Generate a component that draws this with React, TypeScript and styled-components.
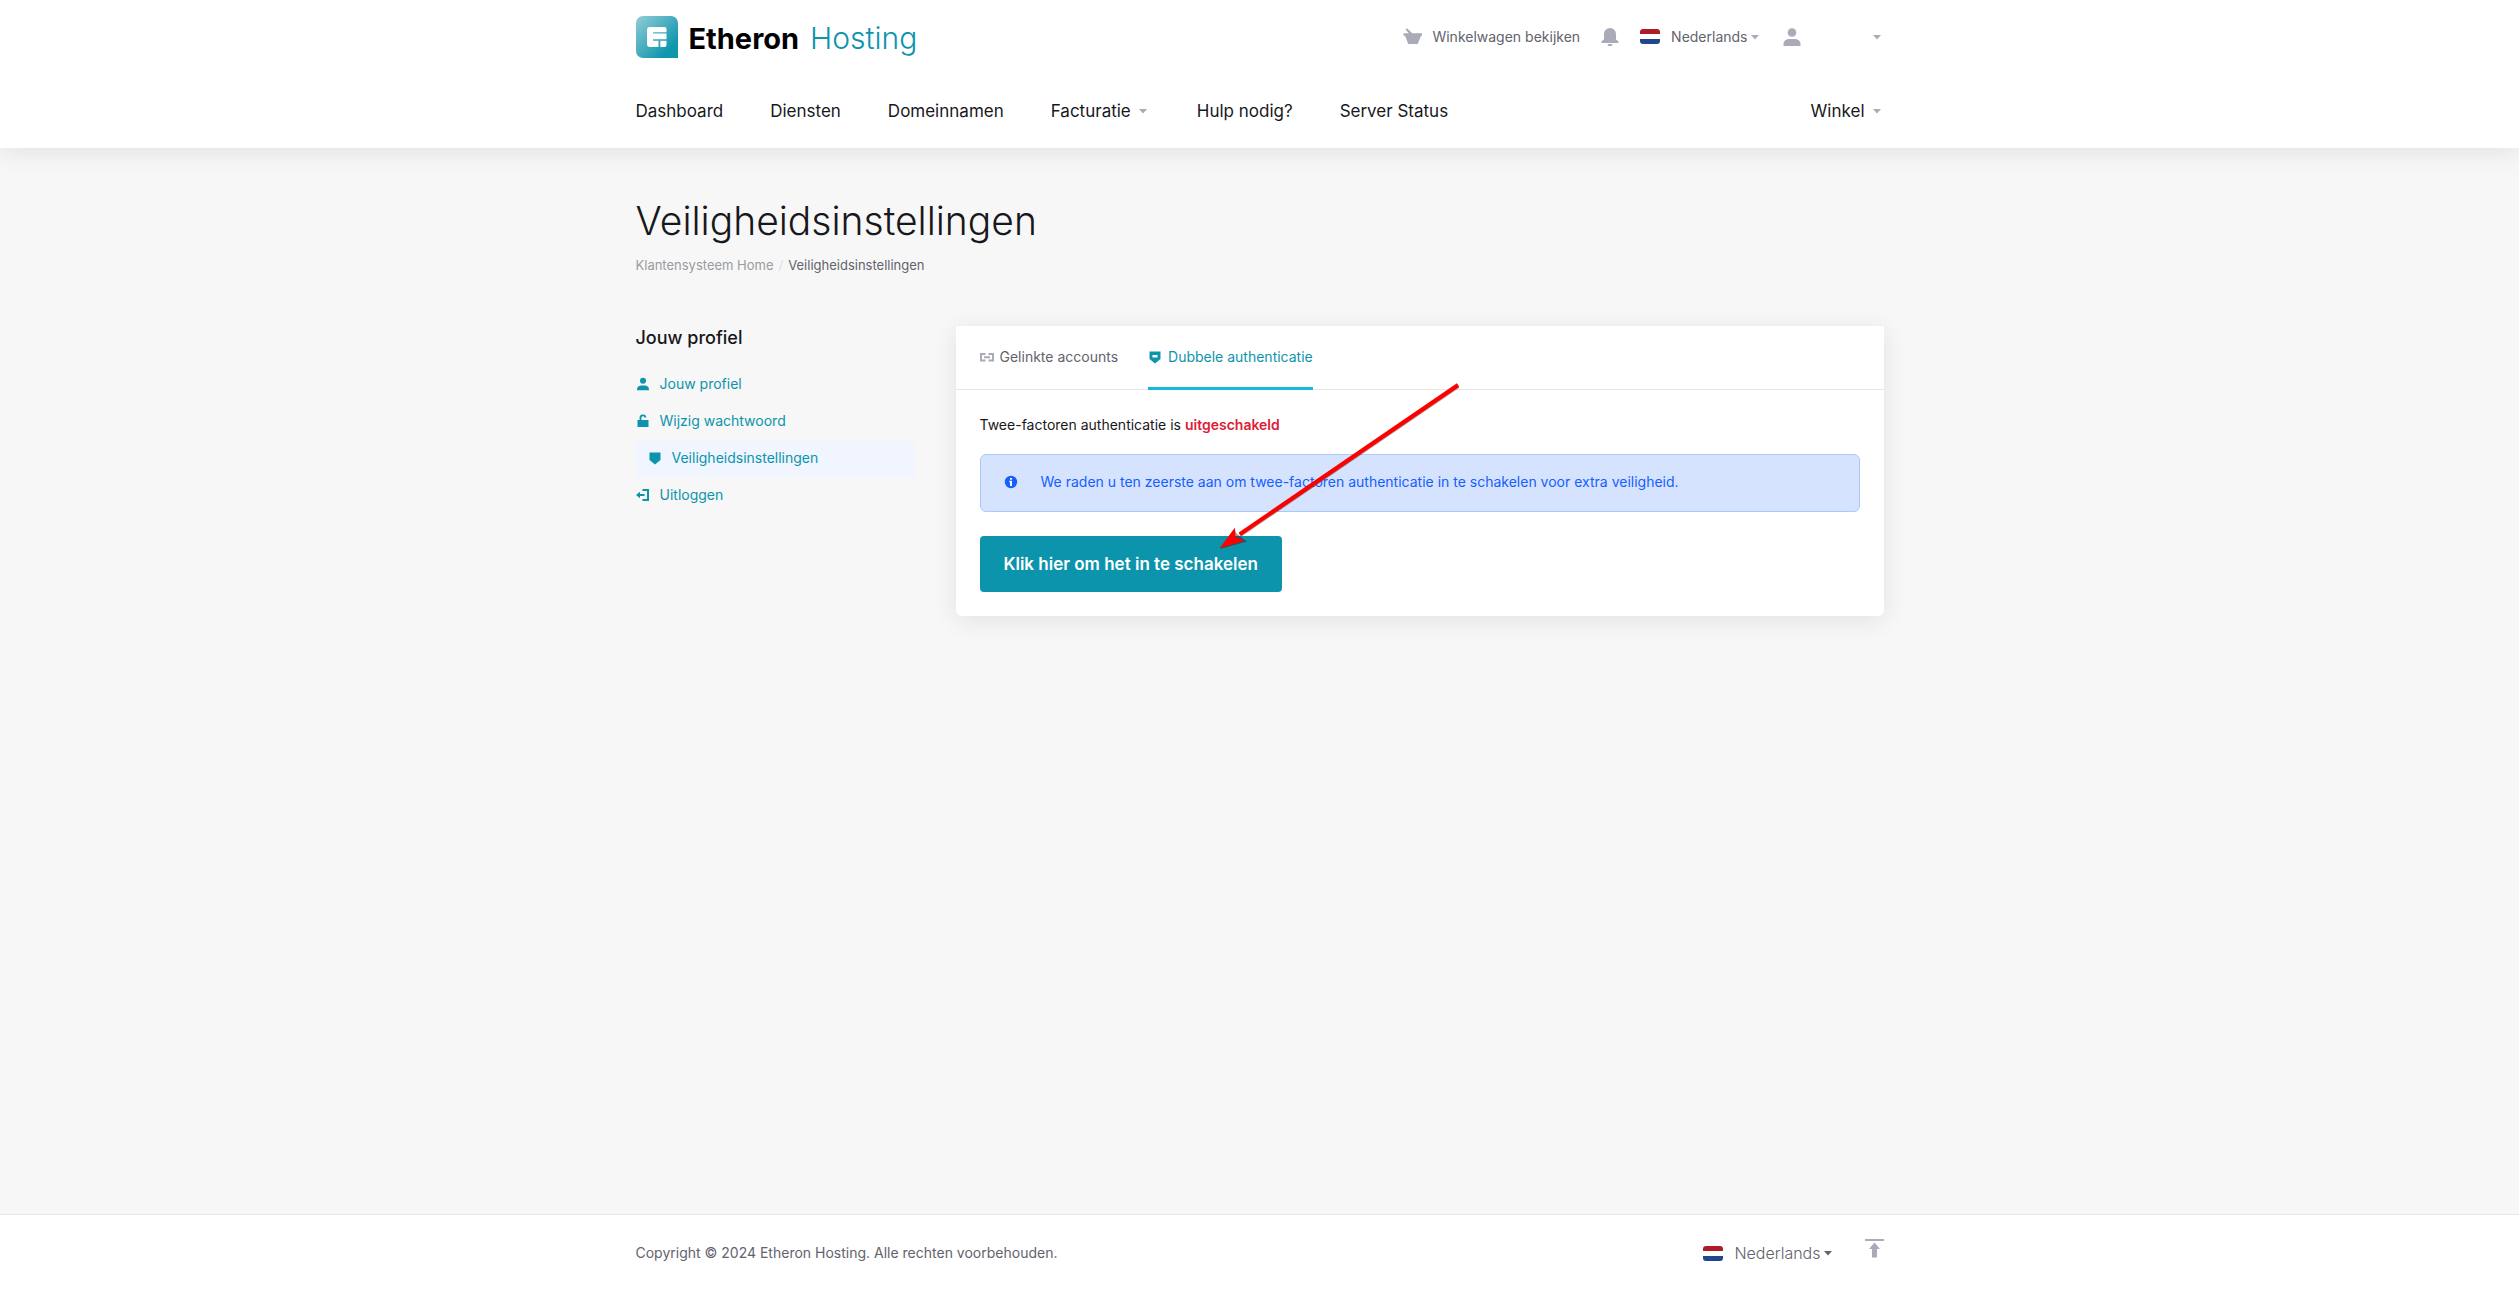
import React from "react";
import styled, { createGlobalStyle, css } from "styled-components";

const color = {
  teal: "#0c94ac",
  accent: "#14bbd8",
  ink: "#17181c",
  text: "#62636d",
  muted: "#999ba2",
  icon: "#a9abb8",
  line: "#e6e6e8",
  page: "#f7f7f7",
  info: "#155eff",
  danger: "#dc2036",
};

const GlobalStyle = createGlobalStyle`
  *, *::before, *::after { box-sizing: border-box; }
  body {
    margin: 0;
    background: ${color.page};
    color: ${color.ink};
    font: 400 14px/24px Inter, "Liberation Sans", sans-serif;
  }
  a { color: inherit; text-decoration: none; }
  button { font: inherit; color: inherit; border: 0; padding: 0; background: none; cursor: pointer; }
  svg { display: block; flex: none; }
`;

const Page = styled.div`
  min-height: 100vh;
  display: flex;
  flex-direction: column;
`;

const Container = styled.div`
  width: 100%;
  max-width: 1296px;
  margin: 0 auto;
  padding: 0 24px;
`;

const Header = styled.header`
  background: #fff;
  box-shadow: 0 4px 24px rgba(0, 0, 0, 0.09);
`;

const TopBar = styled.div`
  height: 73px;
  display: flex;
  align-items: center;
  justify-content: space-between;
`;

const Brand = styled.a`
  display: flex;
  align-items: center;
  gap: 11px;
  font-size: 30px;
  line-height: 40px;
  color: ${color.teal};
  font-weight: 300;
`;

const BrandName = styled.span`
  display: flex;
  align-items: baseline;
  gap: 11px;
  padding-top: 3px;
`;

const BrandStrong = styled.strong`
  font-size: 29px;
  font-weight: 700;
  color: #000;
`;

const Tools = styled.div`
  display: flex;
  align-items: center;
  gap: 18px;
  color: ${color.text};
`;

const ToolLink = styled.a`
  display: flex;
  align-items: center;
  gap: 7px;
`;

const LanguageButton = styled.button<{ $light?: boolean }>`
  display: flex;
  align-items: center;
  color: ${color.text};
  ${(p) =>
    p.$light &&
    css`
      font-size: 16px;
      font-weight: 300;
    `}
`;

const LanguageName = styled.span`
  margin-left: 11px;
`;

const Flag = styled.span`
  width: 20px;
  height: 15px;
  border-radius: 3px;
  background: linear-gradient(#ae1c28 0 5px, #fff 5px 10px, #21468b 10px);
`;

const AccountButton = styled.button`
  width: 104px;
  display: flex;
  align-items: center;
  justify-content: space-between;
`;

const Nav = styled.nav`
  height: 75px;
  display: flex;
  align-items: center;
  gap: 47px;
  font-size: 17px;
`;

const NavItem = styled.a<{ $end?: boolean }>`
  display: flex;
  align-items: center;
  gap: 5px;
  margin-left: ${(p) => (p.$end ? "auto" : "0")};
`;

const Main = styled.main`
  flex: 1;
  padding: 48px 0;
`;

const Title = styled.h1`
  margin: 0;
  font-size: 39px;
  line-height: 50px;
  font-weight: 300;
`;

const Crumbs = styled.nav`
  display: flex;
  gap: 5px;
  margin: 9px 0 51px;
  font-size: 13px;
  line-height: 20px;
  color: ${color.text};
`;

const CrumbLink = styled.a`
  color: ${color.muted};
`;

const CrumbSlash = styled.span`
  color: #dddde3;
`;

const Columns = styled.div`
  display: grid;
  grid-template-columns: 279px 1fr;
  gap: 41px;
  align-items: start;
`;

const SideTitle = styled.h2`
  margin: 0 0 17px;
  font-size: 18px;
  line-height: 24px;
  font-weight: 500;
`;

const SideList = styled.ul`
  display: grid;
  gap: 1px;
  margin: 0;
  padding: 0;
  list-style: none;
`;

const SideLink = styled.a<{ $active?: boolean }>`
  height: 36px;
  display: flex;
  align-items: center;
  gap: 10px;
  padding: 0 ${(p) => (p.$active ? 12 : 0)}px 2px;
  border-radius: 4px;
  background: ${(p) => (p.$active ? "#f0f5ff" : "transparent")};
  color: ${color.teal};
`;

const Card = styled.section`
  position: relative;
  background: #fff;
  border-radius: 0 0 6px 6px;
  box-shadow: 0 4px 24px rgba(0, 0, 0, 0.09);
`;

const Tabs = styled.div`
  height: 64px;
  display: flex;
  gap: 30px;
  padding: 0 24px;
  box-shadow: inset 0 -1px ${color.line};
`;

const Tab = styled.button<{ $active?: boolean }>`
  display: flex;
  align-items: center;
  gap: 6px;
  padding-bottom: 2px;
  color: ${(p) => (p.$active ? color.teal : color.text)};
  box-shadow: ${(p) => (p.$active ? `inset 0 -3px ${color.accent}` : "none")};
`;

const CardBody = styled.div`
  padding: 23px 24px 24px;
`;

const Status = styled.p`
  margin: 0 0 17px;
`;

const StatusValue = styled.strong`
  font-weight: 600;
  color: ${color.danger};
`;

const Alert = styled.div`
  display: flex;
  align-items: center;
  gap: 23px;
  margin-bottom: 24px;
  padding: 15px 23px 17px;
  border: 1px solid #adc8ff;
  border-radius: 6px;
  background: #d6e3ff;
  color: ${color.info};
`;

const PrimaryButton = styled.button`
  height: 56px;
  padding: 0 24px;
  border-radius: 4px;
  background: ${color.teal};
  color: #fff;
  font-size: 17px;
  font-weight: 600;
`;

const Pointer = styled.svg`
  position: absolute;
  top: 54px;
  left: 260px;
  pointer-events: none;
`;

const Footer = styled.footer`
  background: #fff;
  border-top: 1px solid ${color.line};
  color: ${color.text};
`;

const FooterRow = styled.div`
  min-height: 76px;
  display: flex;
  align-items: center;
  justify-content: space-between;
`;

const FooterTools = styled.div`
  display: flex;
  align-items: center;
  gap: 30px;
`;

const TopLink = styled.a`
  padding-bottom: 10px;
`;

const Caret = ({ fill = color.icon }: { fill?: string }) => (
  <svg width="14" height="14" viewBox="0 0 14 14" aria-hidden="true">
    <path d="M3 5h8L7 9.500z" fill={fill} />
  </svg>
);

const LogoMark = () => (
  <svg width="42" height="42" viewBox="0 0 42 42" aria-hidden="true">
    <defs>
      <linearGradient id="mark" x1="0" y1="0" x2="1" y2="1">
        <stop offset="0" stopColor="#93cdd7" />
        <stop offset="0.8" stopColor="#1096ad" />
      </linearGradient>
    </defs>
    <path d="M7 0h28a7 7 0 0 1 7 7v35H7a7 7 0 0 1-7-7V7a7 7 0 0 1 7-7z" fill="url(#mark)" />
    <path
      d="M14 11h14.500a2 2 0 0 1 2 2v3.200H17v1.300h13.500v5.700H17v1.500h5.500V31H14a3 3 0 0 1-3-3V14a3 3 0 0 1 3-3z"
      fill="#fff"
    />
    <path d="M24.300 24.700h6.200V29a2 2 0 0 1-2 2h-4.200z" fill="#fff" />
  </svg>
);

const BasketIcon = () => (
  <svg width="24" height="24" viewBox="0 0 24 24" fill={color.icon} aria-hidden="true">
    <path d="M4.500 4.500 6 3.300 11.300 8.200H21v2.600h-1L16.900 18.500a1 1 0 0 1-.9.500H8a1 1 0 0 1-.9-.5L4 10.800H2.500V8.200h5.300z" />
  </svg>
);

const BellIcon = () => (
  <svg width="24" height="24" viewBox="0 0 24 24" fill={color.icon} aria-hidden="true">
    <path d="M12 3a6 6 0 0 1 6 6v5.500l2.500 1.800V18h-17v-1.700L6 14.500V9a6 6 0 0 1 6-6zM9.500 19h5a2.500 2.300 0 0 1-5 0z" />
  </svg>
);

const PersonIcon = ({ size, inset, fill }: { size: number; inset: number; fill: string }) => (
  <svg
    width={size}
    height={size}
    viewBox={`${inset} ${inset} ${24 - 2 * inset} ${24 - 2 * inset}`}
    fill={fill}
    aria-hidden="true"
  >
    <circle cx="12" cy="7.500" r="4.300" />
    <path d="M3.500 21v-2c0-3.300 3-5 6-5h5c3 0 6 1.700 6 5v2z" />
  </svg>
);

const LockIcon = () => (
  <svg width="14" height="14" viewBox="0 0 14 14" aria-hidden="true">
    <path d="M1.500 6h11v7h-11z" fill={color.teal} />
    <path d="M4.500 6.500V4.300a2.500 2.500 0 0 1 5-.8" fill="none" stroke={color.teal} strokeWidth="1.800" />
  </svg>
);

const ShieldIcon = ({ cut }: { cut?: boolean }) => (
  <svg width="14" height="14" viewBox="0 0 14 14" aria-hidden="true">
    <path d="M1.500 1.500h11V9L7 13.500 1.500 9z" fill={color.teal} />
    {cut && <path d="M4.500 5h5v2.500h-5z" fill="#fff" />}
  </svg>
);

const LogoutIcon = () => (
  <svg width="14" height="14" viewBox="0 0 14 14" fill={color.teal} aria-hidden="true">
    <path d="M6.500 1H13v12H6.500v-2h4.500V3H6.500z" />
    <path d="M0 7l4-3.300v2.300h4.500v2H4v2.300z" />
  </svg>
);

const LinkIcon = () => (
  <svg width="14" height="14" viewBox="0 0 14 14" fill="none" stroke={color.icon} strokeWidth="2" aria-hidden="true">
    <path d="M5.500 4H1v6.500h4.500M8.500 4H13v6.500H8.500M4 7.200h6" />
  </svg>
);

const InfoIcon = () => (
  <svg width="14" height="14" viewBox="0 0 14 14" aria-hidden="true">
    <circle cx="7" cy="7" r="6.200" fill={color.info} />
    <path d="M6 3h2v1.800H6zM5.300 5.800H8V11H6V7.200h-.7z" fill="#fff" />
  </svg>
);

const ToTopIcon = () => (
  <svg width="19" height="19" viewBox="0 0 19 19" fill={color.icon} aria-hidden="true">
    <path d="M0 0h19v2H0zM9.500 3.500 15 10h-3v8.500H7V10H4z" />
  </svg>
);

const navItems = [
  { label: "Dashboard" },
  { label: "Diensten" },
  { label: "Domeinnamen" },
  { label: "Facturatie", menu: true },
  { label: "Hulp nodig?" },
  { label: "Server Status" },
  { label: "Winkel", menu: true, end: true },
];

const sideItems = [
  { label: "Jouw profiel", icon: <PersonIcon size={14} inset={2} fill={color.teal} /> },
  { label: "Wijzig wachtwoord", icon: <LockIcon /> },
  { label: "Veiligheidsinstellingen", icon: <ShieldIcon />, active: true },
  { label: "Uitloggen", icon: <LogoutIcon /> },
];

export default function App() {
  return (
    <Page>
      <GlobalStyle />
      <Header>
        <Container>
          <TopBar>
            <Brand href="#">
              <LogoMark />
              <BrandName>
                <BrandStrong>Etheron</BrandStrong>
                <span>Hosting</span>
              </BrandName>
            </Brand>
            <Tools>
              <ToolLink href="#">
                <BasketIcon />
                Winkelwagen bekijken
              </ToolLink>
              <button type="button" aria-label="Meldingen">
                <BellIcon />
              </button>
              <LanguageButton type="button">
                <Flag />
                <LanguageName>Nederlands</LanguageName>
                <Caret />
              </LanguageButton>
              <AccountButton type="button" aria-label="Account">
                <PersonIcon size={24} inset={0} fill={color.icon} />
                <Caret />
              </AccountButton>
            </Tools>
          </TopBar>
          <Nav>
            {navItems.map((item) => (
              <NavItem key={item.label} href="#" $end={item.end}>
                {item.label}
                {item.menu && <Caret />}
              </NavItem>
            ))}
          </Nav>
        </Container>
      </Header>

      <Main>
        <Container>
          <Title>Veiligheidsinstellingen</Title>
          <Crumbs>
            <CrumbLink href="#">Klantensysteem Home</CrumbLink>
            <CrumbSlash>/</CrumbSlash>
            <span>Veiligheidsinstellingen</span>
          </Crumbs>
          <Columns>
            <aside>
              <SideTitle>Jouw profiel</SideTitle>
              <SideList>
                {sideItems.map((item) => (
                  <li key={item.label}>
                    <SideLink href="#" $active={item.active}>
                      {item.icon}
                      {item.label}
                    </SideLink>
                  </li>
                ))}
              </SideList>
            </aside>
            <Card>
              <Tabs role="tablist">
                <Tab type="button" role="tab" aria-selected={false}>
                  <LinkIcon />
                  Gelinkte accounts
                </Tab>
                <Tab type="button" role="tab" aria-selected $active>
                  <ShieldIcon cut />
                  Dubbele authenticatie
                </Tab>
              </Tabs>
              <CardBody>
                <Status>
                  Twee-factoren authenticatie is <StatusValue>uitgeschakeld</StatusValue>
                </Status>
                <Alert>
                  <InfoIcon />
                  <span>
                    We raden u ten zeerste aan om twee-factoren authenticatie in te schakelen voor extra veiligheid.
                  </span>
                </Alert>
                <PrimaryButton type="button">Klik hier om het in te schakelen</PrimaryButton>
              </CardBody>
              <Pointer width="250" height="176" viewBox="0 0 250 176" aria-hidden="true">
                <g fill="#5a1010" opacity="0.5">
                  <path d="M240.900 4.300l2.300 3.400L25 156.800l-2.300-3.400z" />
                  <path d="M4 169l14.500-20 2.300 5 10.200 7.500z" />
                </g>
                <path d="M240.900 3.300l2.300 3.400L25 155.800l-2.300-3.400z" fill="#f00" />
                <path d="M4 168l14.700-20 .6 9 8.500 3z" fill="#f00" />
                <path d="M4 168l15-20-.5 9.500 9.300 3.500z" fill="#f00" />
              </Pointer>
            </Card>
          </Columns>
        </Container>
      </Main>

      <Footer>
        <Container>
          <FooterRow>
            <span>Copyright © 2024 Etheron Hosting. Alle rechten voorbehouden.</span>
            <FooterTools>
              <LanguageButton type="button" $light>
                <Flag />
                <LanguageName>Nederlands</LanguageName>
                <Caret fill={color.text} />
              </LanguageButton>
              <TopLink href="#" aria-label="Naar boven">
                <ToTopIcon />
              </TopLink>
            </FooterTools>
          </FooterRow>
        </Container>
      </Footer>
    </Page>
  );
}
